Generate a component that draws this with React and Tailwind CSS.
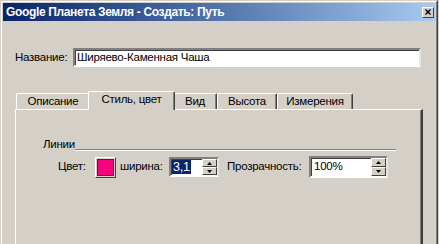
import React from 'react';

const tabs = [
  { label: 'Описание', w: 'w-[74px]' },
  { label: 'Стиль, цвет', w: 'w-[87px]', active: true },
  { label: 'Вид', w: 'w-[44px]' },
  { label: 'Высота', w: 'w-[60px]' },
  { label: 'Измерения', w: 'w-[76px]' },
];

const SpinButtons = () => (
  <div className="flex flex-col w-[15px] h-full">
    <div className="flex-1 flex items-center justify-center bg-[#d4d0c8] border-t border-l border-r border-b border-t-white border-l-white border-r-[#404040] border-b-[#404040]">
      <svg width="5" height="3" viewBox="0 0 5 3"><path d="M2.5 0L5 3H0z" fill="#000" /></svg>
    </div>
    <div className="flex-1 flex items-center justify-center bg-[#d4d0c8] border-t border-l border-r border-b border-t-white border-l-white border-r-[#404040] border-b-[#404040]">
      <svg width="5" height="3" viewBox="0 0 5 3"><path d="M0 0H5L2.5 3z" fill="#000" /></svg>
    </div>
  </div>
);

export default function App() {
  return (
    <div className="w-[439px] h-[244px] bg-[#d4d0c8] overflow-hidden text-black font-['Liberation_Sans',sans-serif] text-[11.5px] tracking-[-0.25px]">
      <div className="w-[438px] h-[250px] border-t border-l border-r border-t-[#d4d0c8] border-l-[#d4d0c8] border-r-[#404040]">
        <div className="h-full border-t border-l border-r border-t-white border-l-white border-r-[#808080] p-[1px]">
          {/* title bar */}
          <div className="h-[18px] flex items-center pl-[3px] pr-[1px] bg-linear-to-r from-[#0a246a] to-[#a6caf0]">
            <span className="text-white font-bold text-[12px] tracking-[-0.35px] leading-none">Google Планета Земля - Создать: Путь</span>
            <div className="ml-auto w-[12px] h-[11px] bg-[#d4d0c8] border border-t-white border-l-white border-r-[#404040] border-b-[#404040] flex items-center justify-center">
              <svg width="6" height="6" viewBox="0 0 6 6">
                <path d="M0.5 0.5L5.5 5.5M5.5 0.5L0.5 5.5" stroke="#000" strokeWidth="1.4" />
              </svg>
            </div>
          </div>

          {/* name row */}
          <div className="flex items-center mt-[27px] pl-[12px] pr-[14px]">
            <span className="w-[58px] shrink-0">Название:</span>
            <div className="flex-1 h-[19px] bg-white border-2 border-t-[#808080] border-l-[#808080] border-b-white border-r-[#e8e6e2] shadow-[inset_1px_1px_#404040] flex items-center pl-[2px]">
              Ширяево-Каменная Чаша
            </div>
          </div>

          {/* tabs */}
          <div className="flex items-end h-[18px] mt-[24px] ml-[13px]">
            {tabs.map((t) =>
              t.active ? (
                <div
                  key={t.label}
                  className={`${t.w} -mx-[2px] -mb-[1px] h-[19px] relative z-10 bg-[#d4d0c8] border-t border-l border-r border-t-white border-l-white border-r-[#404040] rounded-t-[2px] shadow-[inset_-1px_0_#808080] flex items-center justify-center pb-[2px]`}
                >
                  {t.label}
                </div>
              ) : (
                <div
                  key={t.label}
                  className={`${t.w} h-[16px] bg-[#d4d0c8] border-t border-l border-r border-t-white border-l-white border-r-[#404040] rounded-t-[2px] shadow-[inset_-1px_0_#808080] flex items-center justify-center`}
                >
                  {t.label}
                </div>
              )
            )}
          </div>

          {/* panel */}
          <div className="ml-[12px] w-[408px] h-[200px] border-t border-l border-r-2 border-t-white border-l-white border-r-[#404040] shadow-[inset_-1px_0_#808080] pt-[27px] pl-[27px] pr-[25px]">
            <div className="flex items-end h-[15px]">
              <span className="leading-[15px]">Линии</span>
              <div className="flex-1 h-[2px] mb-[1px] border-t border-b border-t-[#808080] border-b-white" />
            </div>

            <div className="flex items-center h-[22px] mt-[4px] pl-[15px]">
              <span className="w-[37px] shrink-0">Цвет:</span>
              <div className="w-[21px] h-[21px] shrink-0 border border-t-white border-l-white border-r-[#404040] border-b-[#404040] p-[1px] bg-[#d4d0c8]">
                <div className="w-full h-full bg-[#f5037e] border border-[#8a0046]" />
              </div>
              <span className="w-[49px] shrink-0 ml-[4px]">ширина:</span>
              <div className="w-[50px] h-[20px] shrink-0 bg-white border-2 border-t-[#808080] border-l-[#808080] border-b-white border-r-[#e8e6e2] shadow-[inset_1px_1px_#404040] flex items-center pl-[1px]">
                <div className="flex-1 flex items-center">
                  <span className="bg-[#0a246a] text-white px-[1px] leading-[14px] text-[12.5px]">3,1</span>
                </div>
                <SpinButtons />
              </div>
              <span className="w-[82px] shrink-0 ml-[8px]">Прозрачность:</span>
              <div className="w-[79px] h-[22px] shrink-0 bg-white border-2 border-t-[#808080] border-l-[#808080] border-b-white border-r-[#e8e6e2] shadow-[inset_1px_1px_#404040] flex items-center pl-[3px]">
                <span className="flex-1">100%</span>
                <SpinButtons />
              </div>
            </div>
          </div>
        </div>
      </div>
    </div>
  );
}
